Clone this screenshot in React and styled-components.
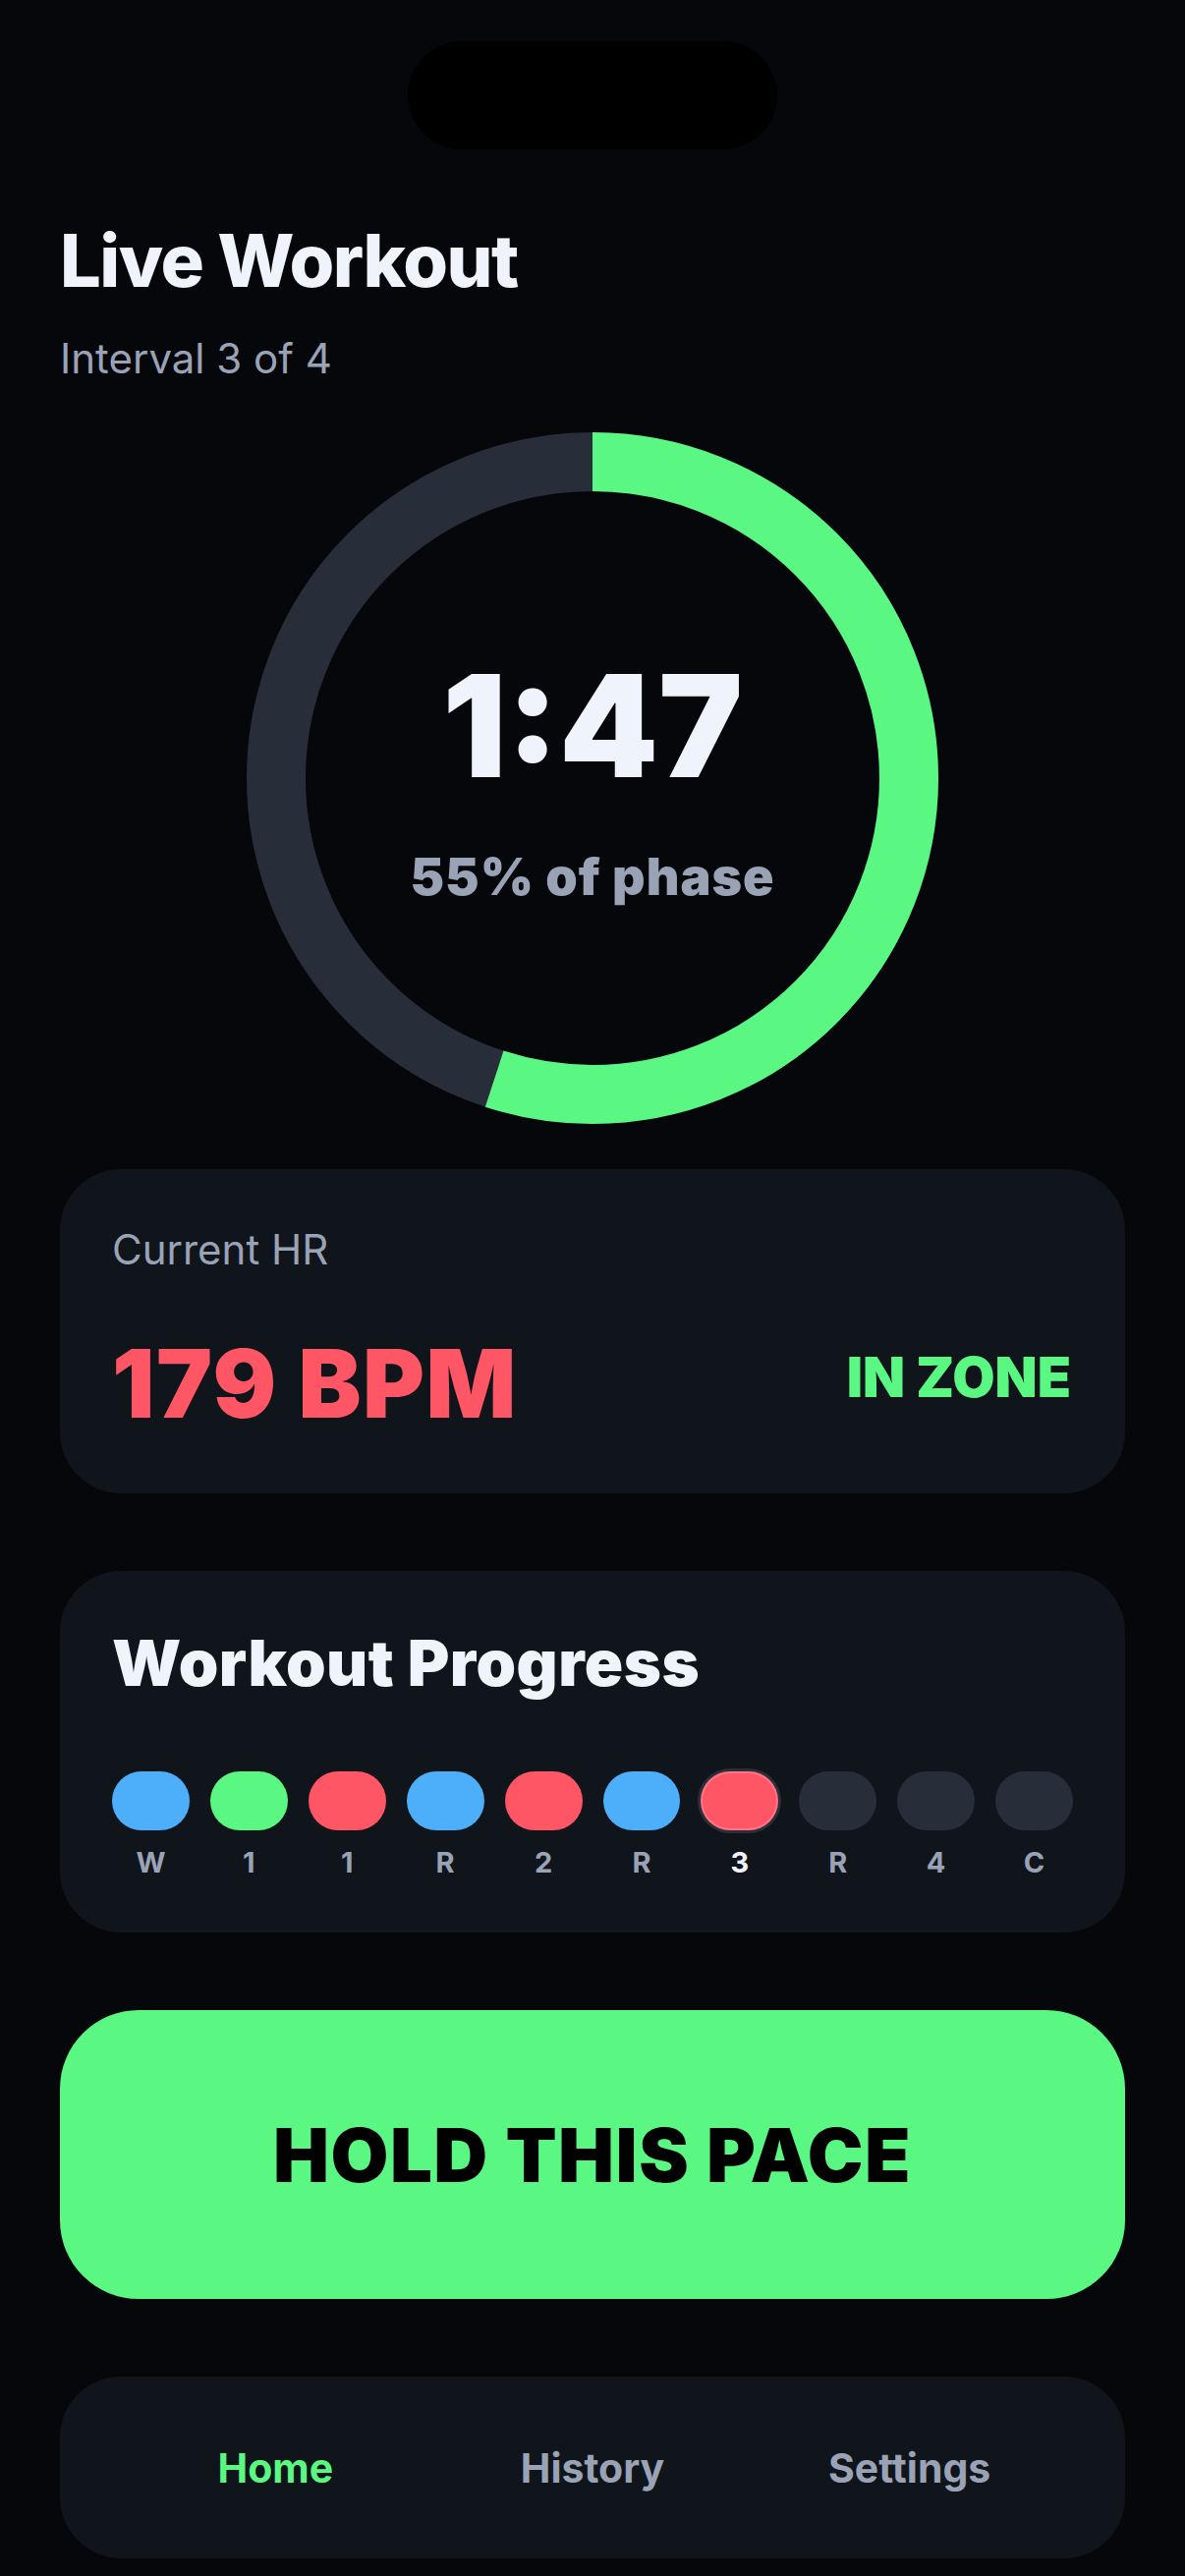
import React from "react";
import styled, { createGlobalStyle } from "styled-components";

const Global = createGlobalStyle`
  html, body { margin: 0; padding: 0; background: #05070A; }
  body { font-family: Inter, "Noto Sans", "Liberation Sans", sans-serif; -webkit-font-smoothing: antialiased; }
  * { box-sizing: border-box; }
`;

const C = {
  bg: "#05070A",
  card: "#10141B",
  white: "#EFF3FB",
  muted: "#9AA3B6",
  green: "#5AF882",
  red: "#FF5666",
  blue: "#4DAEFA",
  track: "#272D39",
};

const Page = styled.div`
  min-height: 2622px;
  background: ${C.bg};
  display: flex;
  flex-direction: column;
  padding: 42px 61px 17px;
`;

const Island = styled.div`
  align-self: center;
  width: 376px;
  height: 110px;
  border-radius: 55px;
  background: #000;
  margin-bottom: 76px;
`;

const Title = styled.h1`
  margin: 0;
  font-size: 74px;
  line-height: 1;
  font-weight: 800;
  letter-spacing: -1.5px;
  color: ${C.white};
`;

const Subtitle = styled.div`
  margin-top: 42px;
  font-size: 42px;
  line-height: 1;
  font-weight: 400;
  color: ${C.muted};
`;

const RingWrap = styled.div`
  align-self: center;
  margin-top: 54px;
  width: 704px;
  height: 704px;
  display: grid;
  & > * { grid-area: 1 / 1; }
`;

const RingCenter = styled.div`
  display: flex;
  flex-direction: column;
  align-items: center;
  justify-content: center;
  gap: 56px;
  padding-top: 2px;
`;

const Time = styled.div`
  font-size: 144px;
  line-height: 1;
  font-weight: 900;
  color: ${C.white};
`;

const Phase = styled.div`
  font-size: 52px;
  line-height: 1;
  font-weight: 900;
  letter-spacing: 1px;
  color: ${C.muted};
`;

const Card = styled.section`
  background: ${C.card};
  border-radius: 62px;
  margin-top: ${(p) => p.$mt}px;
  padding: ${(p) => p.$pad};
`;

const Label = styled.div`
  font-size: 42px;
  line-height: 1;
  color: ${C.muted};
`;

const HrRow = styled.div`
  margin-top: 67px;
  display: flex;
  align-items: center;
  justify-content: space-between;
`;

const Bpm = styled.div`
  font-size: 96px;
  line-height: 1;
  font-weight: 900;
  letter-spacing: 1.5px;
  color: ${C.red};
`;

const Zone = styled.div`
  font-size: 56px;
  line-height: 1;
  font-weight: 900;
  color: ${C.green};
  margin-bottom: 12px;
`;

const CardTitle = styled.h2`
  margin: 0;
  font-size: 65px;
  line-height: 1;
  font-weight: 900;
  letter-spacing: 0.5px;
  color: ${C.white};
`;

const Steps = styled.div`
  margin-top: 78px;
  display: grid;
  grid-template-columns: repeat(10, 1fr);
  column-gap: 21px;
`;

const Step = styled.div`
  display: flex;
  flex-direction: column;
  align-items: center;
  gap: 18px;
`;

const Pill = styled.div`
  width: 100%;
  height: 60px;
  border-radius: 30px;
  background: ${(p) => p.$color};
  box-shadow: ${(p) =>
    p.$current
      ? "0 0 0 3px #2A2F3A, inset 0 0 0 2px rgba(255,255,255,0.18)"
      : "none"};
`;

const StepLabel = styled.div`
  font-size: 29px;
  line-height: 30px;
  font-weight: 700;
  color: ${(p) => (p.$current ? C.white : C.muted)};
`;

const Cta = styled.button`
  margin-top: 79px;
  height: 294px;
  border: 0;
  border-radius: 80px;
  background: ${C.green};
  color: #000;
  font-family: inherit;
  font-size: 76px;
  font-weight: 900;
  letter-spacing: 1.5px;
  display: flex;
  align-items: center;
  justify-content: center;
`;

const Nav = styled.nav`
  margin-top: 79px;
  height: 185px;
  border-radius: 62px;
  background: ${C.card};
  display: grid;
  grid-template-columns: repeat(3, 1fr);
  align-items: center;
  padding: 0 58px;
`;

const NavItem = styled.div`
  text-align: center;
  font-size: 41px;
  font-weight: 700;
  color: ${(p) => (p.$active ? C.green : C.muted)};
`;

const steps = [
  { l: "W", c: C.blue },
  { l: "1", c: C.green },
  { l: "1", c: C.red },
  { l: "R", c: C.blue },
  { l: "2", c: C.red },
  { l: "R", c: C.blue },
  { l: "3", c: C.red, cur: true },
  { l: "R", c: C.track },
  { l: "4", c: C.track },
  { l: "C", c: C.track },
];

function Ring({ pct }) {
  const r = 322;
  const circ = 2 * Math.PI * r;
  return (
    <svg width="704" height="704" viewBox="0 0 704 704">
      <circle cx="352" cy="352" r={r} fill="none" stroke={C.track} strokeWidth="60" />
      <circle
        cx="352"
        cy="352"
        r={r}
        fill="none"
        stroke={C.green}
        strokeWidth="60"
        strokeDasharray={`${circ * pct} ${circ}`}
        transform="rotate(-90 352 352)"
      />
    </svg>
  );
}

export default function App() {
  return (
    <>
      <Global />
      <Page>
        <Island />
        <Title>Live Workout</Title>
        <Subtitle>Interval 3 of 4</Subtitle>
        <RingWrap>
          <Ring pct={0.55} />
          <RingCenter>
            <Time>1:47</Time>
            <Phase>55% of phase</Phase>
          </RingCenter>
        </RingWrap>
        <Card $mt={46} $pad="61px 55px 64px 53px">
          <Label>Current HR</Label>
          <HrRow>
            <Bpm>179 BPM</Bpm>
            <Zone>IN ZONE</Zone>
          </HrRow>
        </Card>
        <Card $mt={79} $pad="61px 53px 56px 53px">
          <CardTitle>Workout Progress</CardTitle>
          <Steps>
            {steps.map((s, i) => (
              <Step key={i}>
                <Pill $color={s.c} $current={s.cur} />
                <StepLabel $current={s.cur}>{s.l}</StepLabel>
              </Step>
            ))}
          </Steps>
        </Card>
        <Cta>HOLD THIS PACE</Cta>
        <Nav>
          <NavItem $active>Home</NavItem>
          <NavItem>History</NavItem>
          <NavItem>Settings</NavItem>
        </Nav>
      </Page>
    </>
  );
}
